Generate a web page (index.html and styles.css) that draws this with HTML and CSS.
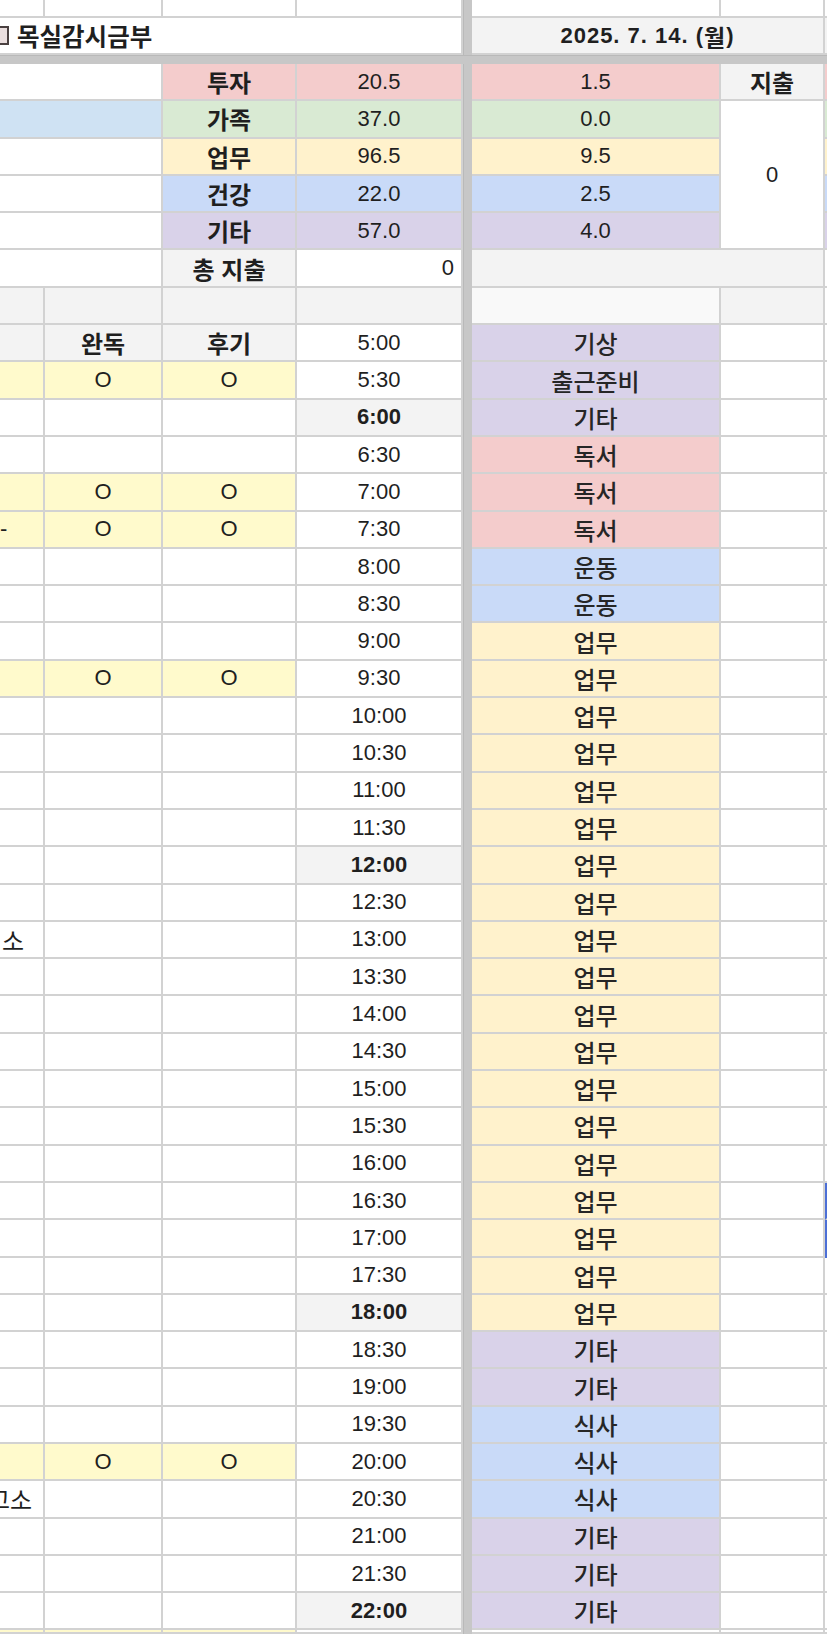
FILE: index.html
```html
<!DOCTYPE html>
<html lang="ko">
<head>
    <meta charset="UTF-8">
    <meta name="viewport" content="width=device-width, initial-scale=1.0">
    <title>목실감시금부</title>
    <link rel="stylesheet" href="styles.css">
</head>
<body>
    <div class="sheet">
        <div class="vfreeze"></div>
        <div class="hfreeze"></div>

        <!-- partial top row -->
        <div class="cell"></div><div class="cell"></div><div class="cell"></div><div class="cell"></div>
        <div class="cell"></div><div class="cell"></div><div class="strip"></div>

        <!-- title row -->
        <div class="cell span4 title"><span class="box"></span><span class="ko">목실감시금부</span></div>
        <div class="cell span2 gray date">2025. 7. 14. (<span class="ko">월</span>)</div>
        <div class="strip gray"></div>

        <!-- summary -->
        <div class="cell span2"></div>
        <div class="cell pink ko b">투자</div>
        <div class="cell pink">20.5</div>
        <div class="cell pink">1.5</div>
        <div class="cell gray ko b">지출</div>
        <div class="strip pink"></div>

        <div class="cell span2 sky"></div>
        <div class="cell green ko b">가족</div>
        <div class="cell green">37.0</div>
        <div class="cell green">0.0</div>
        <div class="cell rows4">0</div>
        <div class="strip green"></div>

        <div class="cell span2"></div>
        <div class="cell yellow ko b">업무</div>
        <div class="cell yellow">96.5</div>
        <div class="cell yellow">9.5</div>
        <div class="strip yellow"></div>

        <div class="cell span2"></div>
        <div class="cell blue ko b">건강</div>
        <div class="cell blue">22.0</div>
        <div class="cell blue">2.5</div>
        <div class="strip blue"></div>

        <div class="cell span2"></div>
        <div class="cell purple ko b">기타</div>
        <div class="cell purple">57.0</div>
        <div class="cell purple">4.0</div>
        <div class="strip purple"></div>

        <div class="cell span2"></div>
        <div class="cell gray ko b">총 지출</div>
        <div class="cell right">0</div>
        <div class="cell span2 gray"></div>
        <div class="strip"></div>

        <div class="cell gray"></div><div class="cell gray"></div><div class="cell gray"></div><div class="cell gray"></div>
        <div class="cell faint"></div><div class="cell gray"></div><div class="strip"></div>

        <!-- time table -->
        <div class="cell gray"></div><div class="cell gray ko b">완독</div><div class="cell gray ko b">후기</div>
        <div class="cell">5:00</div><div class="cell purple act">기상</div><div class="cell"></div><div class="strip"></div>

        <div class="cell lemon"></div><div class="cell lemon">O</div><div class="cell lemon">O</div>
        <div class="cell">5:30</div><div class="cell purple act">출근준비</div><div class="cell"></div><div class="strip"></div>

        <div class="cell"></div><div class="cell"></div><div class="cell"></div>
        <div class="cell gray b">6:00</div><div class="cell purple act">기타</div><div class="cell"></div><div class="strip"></div>

        <div class="cell"></div><div class="cell"></div><div class="cell"></div>
        <div class="cell">6:30</div><div class="cell pink act">독서</div><div class="cell"></div><div class="strip"></div>

        <div class="cell lemon"></div><div class="cell lemon">O</div><div class="cell lemon">O</div>
        <div class="cell">7:00</div><div class="cell pink act">독서</div><div class="cell"></div><div class="strip"></div>

        <div class="cell lemon left"><span class="dash">-</span></div><div class="cell lemon">O</div><div class="cell lemon">O</div>
        <div class="cell">7:30</div><div class="cell pink act">독서</div><div class="cell"></div><div class="strip"></div>

        <div class="cell"></div><div class="cell"></div><div class="cell"></div>
        <div class="cell">8:00</div><div class="cell blue act">운동</div><div class="cell"></div><div class="strip"></div>

        <div class="cell"></div><div class="cell"></div><div class="cell"></div>
        <div class="cell">8:30</div><div class="cell blue act">운동</div><div class="cell"></div><div class="strip"></div>

        <div class="cell"></div><div class="cell"></div><div class="cell"></div>
        <div class="cell">9:00</div><div class="cell yellow act">업무</div><div class="cell"></div><div class="strip"></div>

        <div class="cell lemon"></div><div class="cell lemon">O</div><div class="cell lemon">O</div>
        <div class="cell">9:30</div><div class="cell yellow act">업무</div><div class="cell"></div><div class="strip"></div>

        <div class="cell"></div><div class="cell"></div><div class="cell"></div>
        <div class="cell">10:00</div><div class="cell yellow act">업무</div><div class="cell"></div><div class="strip"></div>

        <div class="cell"></div><div class="cell"></div><div class="cell"></div>
        <div class="cell">10:30</div><div class="cell yellow act">업무</div><div class="cell"></div><div class="strip"></div>

        <div class="cell"></div><div class="cell"></div><div class="cell"></div>
        <div class="cell">11:00</div><div class="cell yellow act">업무</div><div class="cell"></div><div class="strip"></div>

        <div class="cell"></div><div class="cell"></div><div class="cell"></div>
        <div class="cell">11:30</div><div class="cell yellow act">업무</div><div class="cell"></div><div class="strip"></div>

        <div class="cell"></div><div class="cell"></div><div class="cell"></div>
        <div class="cell gray b">12:00</div><div class="cell yellow act">업무</div><div class="cell"></div><div class="strip"></div>

        <div class="cell"></div><div class="cell"></div><div class="cell"></div>
        <div class="cell">12:30</div><div class="cell yellow act">업무</div><div class="cell"></div><div class="strip"></div>

        <div class="cell left ko"><span class="cut">소</span></div><div class="cell"></div><div class="cell"></div>
        <div class="cell">13:00</div><div class="cell yellow act">업무</div><div class="cell"></div><div class="strip"></div>

        <div class="cell"></div><div class="cell"></div><div class="cell"></div>
        <div class="cell">13:30</div><div class="cell yellow act">업무</div><div class="cell"></div><div class="strip"></div>

        <div class="cell"></div><div class="cell"></div><div class="cell"></div>
        <div class="cell">14:00</div><div class="cell yellow act">업무</div><div class="cell"></div><div class="strip"></div>

        <div class="cell"></div><div class="cell"></div><div class="cell"></div>
        <div class="cell">14:30</div><div class="cell yellow act">업무</div><div class="cell"></div><div class="strip"></div>

        <div class="cell"></div><div class="cell"></div><div class="cell"></div>
        <div class="cell">15:00</div><div class="cell yellow act">업무</div><div class="cell"></div><div class="strip"></div>

        <div class="cell"></div><div class="cell"></div><div class="cell"></div>
        <div class="cell">15:30</div><div class="cell yellow act">업무</div><div class="cell"></div><div class="strip"></div>

        <div class="cell"></div><div class="cell"></div><div class="cell"></div>
        <div class="cell">16:00</div><div class="cell yellow act">업무</div><div class="cell"></div><div class="strip"></div>

        <div class="cell"></div><div class="cell"></div><div class="cell"></div>
        <div class="cell">16:30</div><div class="cell yellow act">업무</div><div class="cell"></div><div class="strip sel"></div>

        <div class="cell"></div><div class="cell"></div><div class="cell"></div>
        <div class="cell">17:00</div><div class="cell yellow act">업무</div><div class="cell"></div><div class="strip sel sel-end"></div>

        <div class="cell"></div><div class="cell"></div><div class="cell"></div>
        <div class="cell">17:30</div><div class="cell yellow act">업무</div><div class="cell"></div><div class="strip"></div>

        <div class="cell"></div><div class="cell"></div><div class="cell"></div>
        <div class="cell gray b">18:00</div><div class="cell yellow act">업무</div><div class="cell"></div><div class="strip"></div>

        <div class="cell"></div><div class="cell"></div><div class="cell"></div>
        <div class="cell">18:30</div><div class="cell purple act">기타</div><div class="cell"></div><div class="strip"></div>

        <div class="cell"></div><div class="cell"></div><div class="cell"></div>
        <div class="cell">19:00</div><div class="cell purple act">기타</div><div class="cell"></div><div class="strip"></div>

        <div class="cell"></div><div class="cell"></div><div class="cell"></div>
        <div class="cell">19:30</div><div class="cell blue act">식사</div><div class="cell"></div><div class="strip"></div>

        <div class="cell lemon"></div><div class="cell lemon">O</div><div class="cell lemon">O</div>
        <div class="cell">20:00</div><div class="cell blue act">식사</div><div class="cell"></div><div class="strip"></div>

        <div class="cell left ko"><span class="cut shift">고소</span></div><div class="cell"></div><div class="cell"></div>
        <div class="cell">20:30</div><div class="cell blue act">식사</div><div class="cell"></div><div class="strip"></div>

        <div class="cell"></div><div class="cell"></div><div class="cell"></div>
        <div class="cell">21:00</div><div class="cell purple act">기타</div><div class="cell"></div><div class="strip"></div>

        <div class="cell"></div><div class="cell"></div><div class="cell"></div>
        <div class="cell">21:30</div><div class="cell purple act">기타</div><div class="cell"></div><div class="strip"></div>

        <div class="cell"></div><div class="cell"></div><div class="cell"></div>
        <div class="cell gray b">22:00</div><div class="cell purple act">기타</div><div class="cell"></div><div class="strip"></div>

        <!-- partial bottom row -->
        <div class="cell lemon"></div><div class="cell lemon"></div><div class="cell lemon"></div>
        <div class="cell"></div><div class="cell"></div><div class="cell"></div><div class="strip"></div>
    </div>
</body>
</html>
```

FILE: styles.css
```css
html, body {
    margin: 0;
    overflow: hidden;
    background-color: #fff;
}
.sheet {
    display: grid;
    grid-template-columns: 45px 118px 134px 166px 9px 249px 104px 2px;
    grid-template-rows: 18px 37px 9px repeat(42, 37.3px) 4px;
    width: 827px;
    height: 1634px;
    font-family: "Liberation Sans", "Noto Sans CJK KR", sans-serif;
    font-size: 22px;
    color: #1f1f1f;
}
.vfreeze {
    grid-column: 5;
    grid-row: 1 / -1;
    background-color: #c7c7c7;
    border-left: 1px solid #b9b9b9;
}
.hfreeze {
    grid-column: 1 / -1;
    grid-row: 3;
    background-color: #c7c7c7;
    border-top: 1px solid #b9b9b9;
}
.cell {
    display: flex;
    align-items: center;
    justify-content: center;
    box-sizing: border-box;
    border-right: 2px solid #d2d2d2;
    border-bottom: 2px solid #d2d2d2;
    overflow: hidden;
    white-space: nowrap;
}
.strip {
    box-sizing: border-box;
    border-bottom: 2px solid #d2d2d2;
}
.span2 {
    grid-column: span 2;
}
.span4 {
    grid-column: span 4;
}
.rows4 {
    grid-row: span 4;
}
.b {
    font-weight: bold;
}
.ko {
    font-family: "Noto Sans CJK KR", sans-serif;
    font-size: 24px;
}
.act {
    font-family: "Noto Sans CJK KR", sans-serif;
    font-size: 24px;
    font-weight: 500;
    color: #262626;
}
.right {
    justify-content: flex-end;
    padding-right: 7px;
}
.left {
    justify-content: flex-start;
}
.title {
    justify-content: flex-start;
    font-weight: bold;
}
.title .ko {
    font-size: 24.5px;
}
.date {
    font-weight: bold;
    letter-spacing: 1px;
}
.date .ko {
    font-size: 23px;
}
.box {
    display: inline-block;
    width: 14px;
    height: 15px;
    margin-left: -9px;
    margin-right: 8px;
    border: 2px solid #4a4040;
    background-color: #eadede;
}
.dash {
    margin-left: 0;
}
.cut {
    margin-left: 2px;
}
.cut.shift {
    margin-left: -12px;
}
.gray { background-color: #f3f3f3; }
.faint { background-color: #f9f9f9; }
.pink { background-color: #f4cccc; }
.green { background-color: #d9ead3; }
.yellow { background-color: #fff2cc; }
.blue { background-color: #c9daf8; }
.sky { background-color: #cfe2f3; }
.purple { background-color: #d9d2e9; }
.lemon { background-color: #fffacc; }
.sel {
    border-left: 2px solid #4c6fd6;
    border-top: 2px solid #4c6fd6;
}
.sel-end {
    border-bottom: 2px solid #4c6fd6;
}
```
